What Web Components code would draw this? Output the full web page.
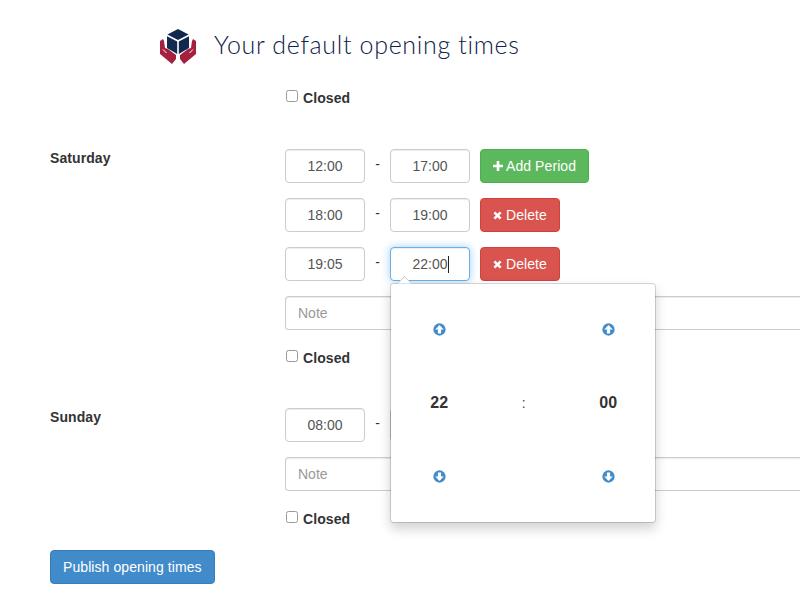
<!DOCTYPE html>
<html lang="en">
<head>
<meta charset="utf-8">
<title>Opening times</title>
<style>
html, body { margin: 0; height: 600px; overflow: hidden; background: #fff; }
body {
  font: 14px/20px "Liberation Sans", Arial, sans-serif;
  color: #333;
}
</style>
</head>
<body>
<opening-times-page>
  <page-heading>Your default opening times</page-heading>

  <closed-check class="first"></closed-check>

  <day-section label="Saturday">
    <period-row from="12:00" to="17:00"><app-button kind="add">Add Period</app-button></period-row>
    <period-row from="18:00" to="19:00"><app-button kind="delete">Delete</app-button></period-row>
    <period-row from="19:05" to="22:00" active><app-button kind="delete">Delete</app-button></period-row>
    <note-field>Note</note-field>
    <closed-check></closed-check>
  </day-section>

  <day-section label="Sunday">
    <period-row from="08:00" to=""></period-row>
    <note-field>Note</note-field>
    <closed-check></closed-check>
  </day-section>

  <app-button kind="primary" class="publish">Publish opening times</app-button>

  <time-popover hours="22" minutes="00"></time-popover>
</opening-times-page>

<script>
const icons = {
  add: `<svg viewBox="0 0 12 12" width="10" height="10"><path d="M4.4 0h3.2v4.4H12v3.2H7.6V12H4.4V7.6H0V4.4h4.4z" fill="currentColor"/></svg>`,
  delete: `<svg viewBox="0 0 12 12" width="9" height="9"><path d="M3 .6 6 3.6l3-3L11.4 3l-3 3 3 3L9 11.4l-3-3-3 3L.6 9l3-3-3-3z" fill="currentColor"/></svg>`,
};

// circle with a cut out arrow, up by default, flipped for down
const arrowIcon = (down) => `
<svg viewBox="0 0 14 14" width="13" height="13" ${down ? 'style="transform:rotate(180deg)"' : ""}>
  <circle cx="7" cy="7" r="6.6" fill="#428bca"/>
  <path d="M7 2.2 11.6 6.9H8.7V11.2H5.3V6.9H2.4z" fill="#fff"/>
</svg>`;

class OpeningTimesPage extends HTMLElement {
  constructor() {
    super();
    this.attachShadow({ mode: "open" }).innerHTML = `
<style>
:host { display: block; position: relative; width: 800px; height: 600px; padding-left: 50px; box-sizing: border-box; }
::slotted(.first) { margin-left: 235px; margin-top: 20px; margin-bottom: 41px; }
::slotted(.publish) { margin-top: 21px; }
</style>
<slot></slot>`;
  }
}

class PageHeading extends HTMLElement {
  constructor() {
    super();
    this.attachShadow({ mode: "open" }).innerHTML = `
<style>
:host { display: flex; align-items: center; gap: 18px; margin-left: 110px; padding-top: 23px; height: 45px; }
svg { flex: none; display: block; }
h1 {
  margin: 0 0 4px;
  font: 300 25px/40px Lato, sans-serif;
  letter-spacing: .67px;
  color: #0f2147;
}
</style>
<svg viewBox="0 0 36 36" width="36" height="36">
  <path d="M18 1 28.6 6.5 18 12 7.4 6.5z" fill="#12284f"/>
  <path d="M7 8.2 17.2 13.5V26L7 20z" fill="#12284f"/>
  <path d="M29 8.2 18.8 13.5V26L29 20z" fill="#12284f"/>
  <path d="M3 11 0 13V26L12 36 16 31V27L8 21 5 20 4 13z" fill="#a5203f"/>
  <path d="M33 11 36 13V26L24 36 20 31V27L28 21 31 20 32 13z" fill="#a5203f"/>
  <path d="M3 21.5 6.5 25M33 21.5 29.5 25" stroke="#fff" stroke-width="1"/>
</svg>
<h1><slot></slot></h1>`;
  }
}

class DaySection extends HTMLElement {
  constructor() {
    super();
    this.attachShadow({ mode: "open" }).innerHTML = `
<style>
:host { display: grid; grid-template-columns: 235px auto; margin-top: 40px; }
.label { font-weight: bold; line-height: 18px; letter-spacing: .08px; }
.rows { display: flex; flex-direction: column; gap: 15px; }
</style>
<div class="label"></div>
<div class="rows"><slot></slot></div>`;
  }
  connectedCallback() {
    this.shadowRoot.querySelector(".label").textContent = this.getAttribute("label");
  }
}

class PeriodRow extends HTMLElement {
  constructor() {
    super();
    this.attachShadow({ mode: "open" }).innerHTML = `
<style>
:host { display: flex; align-items: stretch; height: 34px; }
.dash { width: 25px; text-align: center; line-height: 30px; font-size: 14px; color: #333; }
::slotted(*) { margin-left: 10px; }
</style>
<time-field id="from"></time-field>
<span class="dash">-</span>
<time-field id="to"></time-field>
<slot></slot>`;
  }
  connectedCallback() {
    const root = this.shadowRoot;
    root.getElementById("from").textContent = this.getAttribute("from");
    root.getElementById("to").textContent = this.getAttribute("to");
    if (this.hasAttribute("active")) root.getElementById("to").setAttribute("focused", "");
  }
}

class TimeField extends HTMLElement {
  constructor() {
    super();
    this.attachShadow({ mode: "open" }).innerHTML = `
<style>
:host {
  display: block;
  box-sizing: border-box;
  width: 80px;
  height: 34px;
  border: 1px solid #ccc;
  border-radius: 4px;
  background: #fff;
  color: #555;
  text-align: center;
  line-height: 32px;
  box-shadow: inset 0 1px 1px rgba(0,0,0,.075);
}
:host([focused]) {
  border-color: #66afe9;
  box-shadow: inset 0 1px 1px rgba(0,0,0,.075), 0 0 8px rgba(102,175,233,.6);
}
.caret { display: none; width: 1px; height: 17px; margin-right: -1px; background: #222; vertical-align: -4px; }
:host([focused]) .caret { display: inline-block; }
</style>
<slot></slot><span class="caret"></span>`;
  }
}

// runs off the right edge of the window in the reference, so no right border
class NoteField extends HTMLElement {
  constructor() {
    super();
    this.attachShadow({ mode: "open" }).innerHTML = `
<style>
:host {
  display: block;
  box-sizing: border-box;
  width: 515px;
  height: 34px;
  padding: 0 12px;
  border: 1px solid #ccc;
  border-right: 0;
  border-radius: 4px 0 0 4px;
  color: #999;
  line-height: 32px;
  box-shadow: inset 0 1px 1px rgba(0,0,0,.075);
}
</style>
<slot></slot>`;
  }
}

class ClosedCheck extends HTMLElement {
  constructor() {
    super();
    this.attachShadow({ mode: "open" }).innerHTML = `
<style>
:host { display: block; height: 20px; margin-top: 3px; }
label { display: flex; align-items: flex-start; font-weight: bold; letter-spacing: .1px; }
input {
  appearance: none;
  box-sizing: border-box;
  width: 12px;
  height: 12px;
  margin: 2px 5px 0 1px;
  background: #fff;
  border: 1px solid #9a9a9a;
  border-radius: 2.5px;
}
</style>
<label><input type="checkbox">Closed</label>`;
  }
}

class AppButton extends HTMLElement {
  constructor() {
    super();
    this.attachShadow({ mode: "open" }).innerHTML = `
<style>
:host {
  display: inline-flex;
  align-items: center;
  gap: 4px;
  box-sizing: border-box;
  height: 34px;
  padding: 0 12px;
  border: 1px solid;
  border-radius: 4px;
  color: #fff;
  white-space: nowrap;
  letter-spacing: .08px;
}
:host([kind="add"]) { background: #5cb85c; border-color: #4cae4c; gap: 3px; }
:host([kind="delete"]) { background: #d9534f; border-color: #d43f3a; }
:host([kind="primary"]) { background: #428bca; border-color: #357ebd; }
.icon { display: flex; }
</style>
<span class="icon"></span><slot></slot>`;
  }
  connectedCallback() {
    const icon = icons[this.getAttribute("kind")];
    const holder = this.shadowRoot.querySelector(".icon");
    if (icon) holder.innerHTML = icon;
    else holder.remove();
  }
}

class TimePopover extends HTMLElement {
  constructor() {
    super();
    this.attachShadow({ mode: "open" }).innerHTML = `
<style>
:host {
  position: absolute;
  left: 390px;
  top: 283px;
  box-sizing: border-box;
  width: 266px;
  height: 240px;
  padding: 9px 4.5px 9px 6px;
  background: #fff;
  border: 1px solid rgba(0,0,0,.15);
  border-radius: 4px;
  box-shadow: 0 6px 12px rgba(0,0,0,.175);
  background-clip: padding-box;
}
:host::before {
  content: "";
  position: absolute;
  left: 8px;
  top: -6px;
  width: 10px;
  height: 10px;
  background: #fff;
  border: 1px solid rgba(0,0,0,.2);
  border-right: 0;
  border-bottom: 0;
  transform: rotate(45deg);
  clip-path: polygon(0 0, 100% 0, 0 100%);
}
.grid {
  display: grid;
  grid-template-columns: repeat(3, 1fr);
  grid-auto-rows: 73.5px;
  place-items: center;
  height: 100%;
}
.num { font-weight: bold; font-size: 16px; color: #333; letter-spacing: .2px; }
.sep { color: #444; font-size: 14px; }
svg { display: block; }
</style>
<div class="grid">
  <div>${arrowIcon(false)}</div><div></div><div>${arrowIcon(false)}</div>
  <div class="num" id="h"></div><div class="sep">:</div><div class="num" id="m"></div>
  <div>${arrowIcon(true)}</div><div></div><div>${arrowIcon(true)}</div>
</div>`;
  }
  connectedCallback() {
    this.shadowRoot.getElementById("h").textContent = this.getAttribute("hours");
    this.shadowRoot.getElementById("m").textContent = this.getAttribute("minutes");
  }
}

customElements.define("opening-times-page", OpeningTimesPage);
customElements.define("page-heading", PageHeading);
customElements.define("day-section", DaySection);
customElements.define("period-row", PeriodRow);
customElements.define("time-field", TimeField);
customElements.define("note-field", NoteField);
customElements.define("closed-check", ClosedCheck);
customElements.define("app-button", AppButton);
customElements.define("time-popover", TimePopover);
</script>
</body>
</html>
